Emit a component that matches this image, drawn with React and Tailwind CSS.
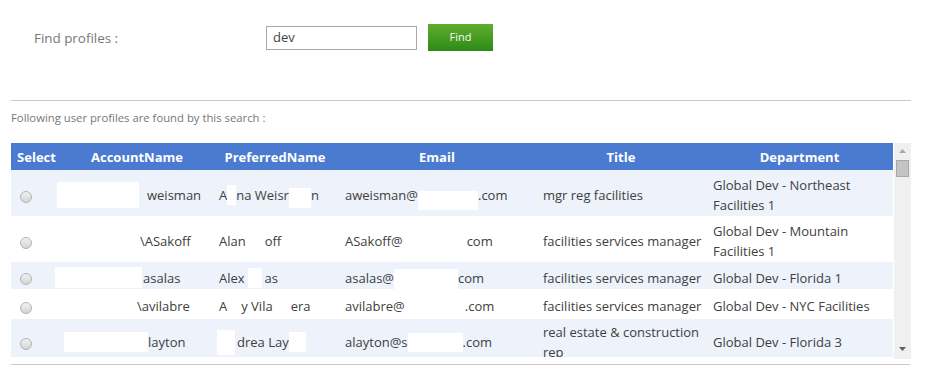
import React from "react";

const F = { fontFamily: '"Open Sans", "Noto Sans", Arial, sans-serif' };

const B = (cls) => ({ box: cls });

const rows = [
  {
    bg: "bg-[#edf2fb]",
    h: "h-[46px]",
    pt: "pt-[4px]",
    acct: [B("w-[82px] h-[26px] -ml-[5px] mr-[8px]"), "weisman"],
    pref: ["A", B("w-[9px] h-[20px]"), "na Weisr", B("w-[22px] h-[20px] translate-y-[3px]"), "n"],
    email: ["aweisman@", B("w-[60px] h-[19px] translate-y-[5px]"), ".com"],
    title: ["mgr reg facilities"],
    dept: ["Global Dev - Northeast", "Facilities 1"],
  },
  {
    bg: "bg-white",
    h: "h-[46px]",
    pt: "pt-[4px]",
    acct: [B("w-[78px] h-[18px]"), "\\ASakoff"],
    pref: ["Alan", B("w-[19px] h-[18px]"), "off"],
    email: ["ASakoff@", B("w-[64px] h-[18px]"), "com"],
    title: ["facilities services manager"],
    dept: ["Global Dev - Mountain", "Facilities 1"],
  },
  {
    bg: "bg-[#edf2fb]",
    h: "h-[27px]",
    pt: "pt-[4px]",
    acct: [B("w-[87px] h-[21px] -ml-[7px] mr-[1px]"), "asalas"],
    pref: ["Alex", B("w-[14px] h-[20px] mx-[3px]"), "as"],
    email: ["asalas@", B("w-[64px] h-[21px] translate-y-[2px]"), "com"],
    title: ["facilities services manager"],
    dept: ["Global Dev - Florida 1"],
  },
  {
    bg: "bg-white",
    h: "h-[30px]",
    pt: "pt-[4px]",
    acct: [B("w-[75px] h-[18px]"), "\\avilabre"],
    pref: ["A", B("w-[14px] h-[18px]"), "y Vila", B("w-[18px] h-[18px]"), "era"],
    email: ["avilabre@", B("w-[60px] h-[18px]"), ".com"],
    title: ["facilities services manager"],
    dept: ["Global Dev - NYC Facilities"],
  },
  {
    bg: "bg-[#edf2fb]",
    h: "h-[46px]",
    pt: "pt-0",
    acct: [B("w-[84px] h-[20px] ml-[2px]"), "layton"],
    pref: [B("w-[18px] h-[25px] -ml-[2px] mr-[2px]"), "drea Lay", B("w-[17px] h-[20px]")],
    email: ["alayton@s", B("w-[55px] h-[19px]"), ".com"],
    title: ["real estate & construction", "rep"],
    dept: ["Global Dev - Florida 3"],
  },
];

function Segs({ segs }) {
  return (
    <div className="flex items-center">
      {segs.map((s, i) =>
        typeof s === "string" ? (
          <span key={i} className="whitespace-pre">
            {s}
          </span>
        ) : (
          <span key={i} className={`inline-block shrink-0 bg-white ${s.box}`} />
        )
      )}
    </div>
  );
}

function Lines({ lines }) {
  return (
    <div>
      {lines.map((l, i) => (
        <div key={i} className="whitespace-pre">
          {l}
        </div>
      ))}
    </div>
  );
}

function Radio() {
  return (
    <span className="ml-[9px] inline-block h-[12px] w-[12px] rounded-full border border-[#b4b4b4] bg-gradient-to-b from-[#f2f2f2] to-[#d4d4d4] align-middle" />
  );
}

export default function App() {
  return (
    <div className="relative w-[941px] h-[379px] bg-white overflow-hidden" style={F}>
      <div className="flex items-center pt-[24px]">
        <div className="ml-[34px] w-[232px] pt-[2px] text-[13.4px] text-[#777]">Find profiles :</div>
        <div className="flex h-[24px] w-[151px] items-center border border-[#a9a9a9] bg-white pl-[6px] text-[13px] text-[#444]">
          dev
        </div>
        <div className="ml-[11px] flex h-[27px] w-[65px] items-center justify-center bg-gradient-to-b from-[#5fae2e] to-[#2c8a16] text-[11px] text-[#f4fff0]">
          Find
        </div>
      </div>

      <div className="ml-[11px] mt-[49px] w-[900px] border-t border-[#c9c9c9]" />

      <div className="ml-[11px] mt-[9px] text-[11.3px] leading-[15px] text-[#777]">
        Following user profiles are found by this search :
      </div>

      <div className="ml-[11px] mt-[18px] flex">
        <div className="h-[214px] w-[882px] overflow-hidden">
          <table className="w-[882px] table-fixed border-collapse text-[13px] leading-[20px] text-[#404040]">
            <colgroup>
              <col className="w-[51px]" />
              <col className="w-[150px]" />
              <col className="w-[126px]" />
              <col className="w-[198px]" />
              <col className="w-[170px]" />
              <col className="w-[187px]" />
            </colgroup>
            <thead>
              <tr className="h-[27px] bg-[#4b7bd0] text-[13px] font-bold text-white">
                <th className="text-center">Select</th>
                <th className="text-center">AccountName</th>
                <th className="text-center">PreferredName</th>
                <th className="text-center">Email</th>
                <th className="text-center">Title</th>
                <th className="text-center">Department</th>
              </tr>
            </thead>
            <tbody>
              {rows.map((r, i) => (
                <tr key={i} className={`${r.bg} ${r.h}`}>
                  <td className={`p-0 align-middle ${r.pt}`}>
                    <Radio />
                  </td>
                  <td className={`p-0 align-middle ${r.pt}`}>
                    <Segs segs={r.acct} />
                  </td>
                  <td className={`p-0 pl-[7px] align-middle ${r.pt}`}>
                    <Segs segs={r.pref} />
                  </td>
                  <td className={`p-0 pl-[7px] align-middle ${r.pt}`}>
                    <Segs segs={r.email} />
                  </td>
                  <td className={`p-0 pl-[7px] align-middle ${r.pt}`}>
                    <Lines lines={r.title} />
                  </td>
                  <td className={`p-0 pl-[7px] align-middle ${r.pt}`}>
                    <Lines lines={r.dept} />
                  </td>
                </tr>
              ))}
            </tbody>
          </table>
        </div>
        <div className="ml-[1px] flex h-[216px] w-[17px] flex-col items-center bg-[#f0f0f0]">
          <svg width="7" height="4" viewBox="0 0 7 4" className="mt-[6px]">
            <path d="M3.5 0 L7 4 L0 4 Z" fill="#a8a8a8" />
          </svg>
          <div className="mt-[7px] h-[17px] w-[13px] border border-[#a8a8a8] bg-[#c4c4c4]" />
          <div className="flex-1" />
          <svg width="7" height="4" viewBox="0 0 7 4" className="mb-[8px]">
            <path d="M0 0 L7 0 L3.5 4 Z" fill="#606060" />
          </svg>
        </div>
      </div>

      <div className="ml-[11px] mt-[5px] w-[899px] border-t border-[#c9c9c9]" />
    </div>
  );
}
